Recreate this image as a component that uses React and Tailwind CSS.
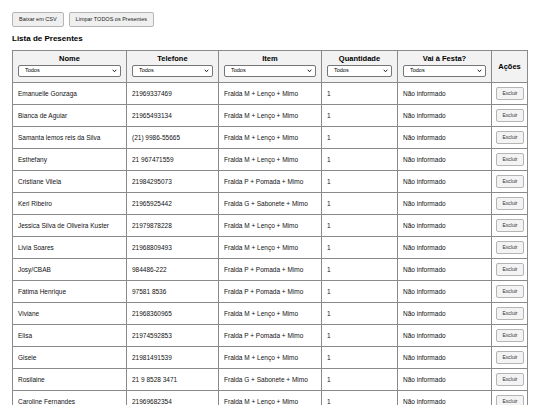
import React from 'react'

const presentes = [
  { nome: 'Emanuelle Gonzaga', telefone: '21969337469', item: 'Fralda M + Lenço + Mimo' },
  { nome: 'Bianca de Aguiar', telefone: '21965493134', item: 'Fralda M + Lenço + Mimo' },
  { nome: 'Samanta lemos reis da Silva', telefone: '(21) 9986-55665', item: 'Fralda M + Lenço + Mimo' },
  { nome: 'Esthefany', telefone: '21 967471559', item: 'Fralda M + Lenço + Mimo' },
  { nome: 'Cristiane Vilela', telefone: '21984295073', item: 'Fralda P + Pomada + Mimo' },
  { nome: 'Keri Ribeiro', telefone: '21965925442', item: 'Fralda G + Sabonete + Mimo' },
  { nome: 'Jessica Silva de Oliveira Kuster', telefone: '21979878228', item: 'Fralda M + Lenço + Mimo' },
  { nome: 'Livia Soares', telefone: '21968809493', item: 'Fralda M + Lenço + Mimo' },
  { nome: 'Josy/CBAB', telefone: '984486-222', item: 'Fralda P + Pomada + Mimo' },
  { nome: 'Fátima Henrique', telefone: '97581 8536', item: 'Fralda P + Pomada + Mimo' },
  { nome: 'Viviane', telefone: '21968360965', item: 'Fralda M + Lenço + Mimo' },
  { nome: 'Elisa', telefone: '21974592853', item: 'Fralda P + Pomada + Mimo' },
  { nome: 'Gisele', telefone: '21981491539', item: 'Fralda M + Lenço + Mimo' },
  { nome: 'Rosilaine', telefone: '21 9 8528 3471', item: 'Fralda G + Sabonete + Mimo' },
  { nome: 'Caroline Fernandes', telefone: '21969682354', item: 'Fralda M + Lenço + Mimo' },
]

function FilterSelect() {
  return (
    <div className="relative mt-[2px]">
      <select className="block h-[12px] w-full appearance-none rounded-[2px] border border-[#767676] bg-white pl-[6px] text-[5.5px] font-normal leading-none text-black">
        <option>Todos</option>
      </select>
      <svg className="pointer-events-none absolute right-[4px] top-[4px] h-[4px] w-[5px]" viewBox="0 0 10 8">
        <path d="M1.5 1.5 L5 5.5 L8.5 1.5" fill="none" stroke="#222" strokeWidth="2" />
      </svg>
    </div>
  )
}

function HeaderCell({ label, width }) {
  return (
    <th className={`${width} border border-[#8a8a8a] bg-[#f2f2f2] px-[5px] pt-[3px] pb-[5px] align-top`}>
      <div className="text-[7.5px] font-bold leading-[9px] text-black">{label}</div>
      <FilterSelect />
    </th>
  )
}

function SmallButton({ children }) {
  return (
    <button className="h-[15px] rounded-[2px] border border-[#b5b5b5] bg-[#efefef] px-[6px] text-[5.5px] leading-none text-[#222]">
      {children}
    </button>
  )
}

export default function App() {
  return (
    <div className="bg-white px-[12px] pt-[12px]" style={{ fontFamily: '"Liberation Sans", Arial, sans-serif' }}>
      <div className="flex gap-[5px]">
        <SmallButton>Baixar em CSV</SmallButton>
        <SmallButton>Limpar TODOS os Presentes</SmallButton>
      </div>

      <h2 className="mt-[6px] mb-[5px] text-[8px] font-bold leading-[12px] text-black">Lista de Presentes</h2>

      <table className="w-[516px] table-fixed border-collapse border border-[#b0b0b0] text-[6.5px] text-[#111]">
        <thead>
          <tr>
            <HeaderCell label="Nome" width="w-[114px]" />
            <HeaderCell label="Telefone" width="w-[92px]" />
            <HeaderCell label="Item" width="w-[103px]" />
            <HeaderCell label="Quantidade" width="w-[76px]" />
            <HeaderCell label="Vai à Festa?" width="w-[94px]" />
            <th className="border border-[#8a8a8a] bg-[#f2f2f2] text-[7.5px] font-bold text-black">Ações</th>
          </tr>
        </thead>
        <tbody>
          {presentes.map((p) => (
            <tr key={p.nome} className="h-[22px]">
              <td className="truncate border border-[#8a8a8a] px-[5px]">{p.nome}</td>
              <td className="border border-[#8a8a8a] px-[5px]">{p.telefone}</td>
              <td className="truncate border border-[#8a8a8a] px-[5px]">{p.item}</td>
              <td className="border border-[#8a8a8a] px-[5px]">1</td>
              <td className="border border-[#8a8a8a] px-[5px]">Não informado</td>
              <td className="border border-[#8a8a8a] px-[4px]">
                <button className="mx-auto flex h-[13px] w-[28px] items-center justify-center rounded-[2px] border border-[#b5b5b5] bg-[#f3f3f3] text-[5px] text-[#333]">
                  Excluir
                </button>
              </td>
            </tr>
          ))}
        </tbody>
      </table>
    </div>
  )
}
